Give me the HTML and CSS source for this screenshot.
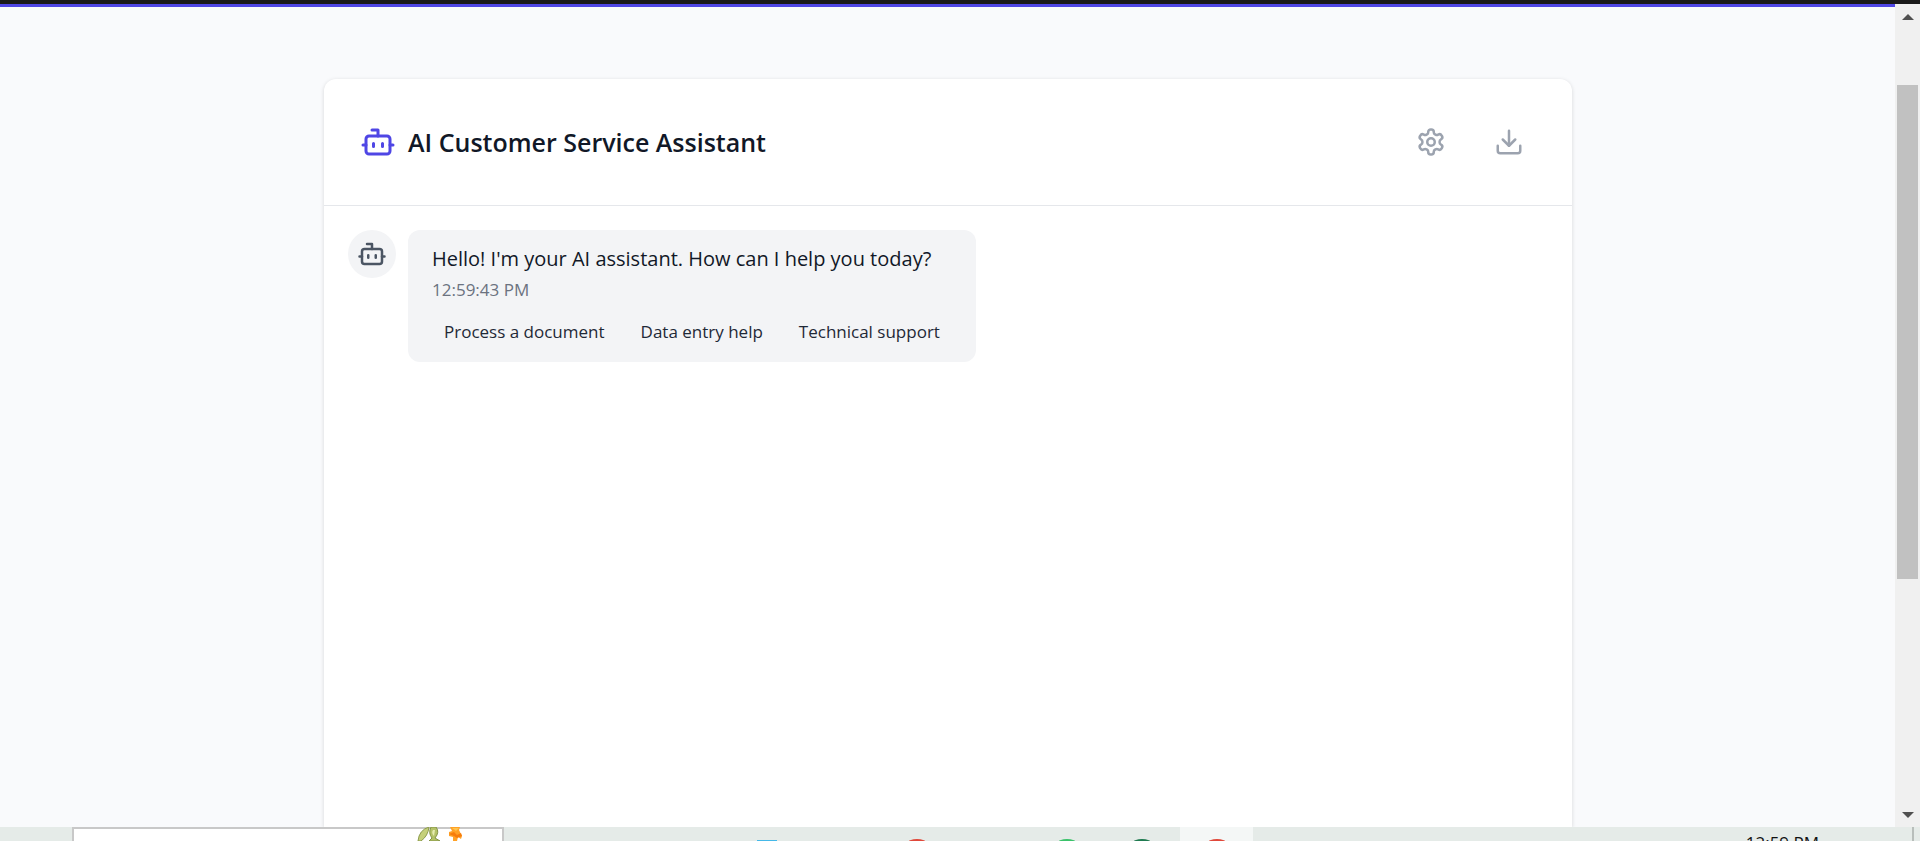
FILE: index.html
```html
<!DOCTYPE html>
<html lang="en">
<head>
<meta charset="utf-8">
<title>AI Customer Service Assistant</title>
<link rel="stylesheet" href="styles.css">
</head>
<body>
<svg class="symbols" aria-hidden="true">
  <symbol id="bot" viewBox="0 0 24 24">
    <path d="M12 8V4H8"/><rect width="16" height="12" x="4" y="8" rx="2"/><path d="M2 14h2M20 14h2M15 13v2M9 13v2"/>
  </symbol>
</svg>
<div class="window-edge"></div>
<div class="viewport">
  <div class="page">
    <main class="card">
      <header class="card-header">
        <svg class="icon icon-brand" aria-hidden="true"><use href="#bot"/></svg>
        <h1 class="title">AI Customer Service Assistant</h1>
        <div class="actions">
          <button class="icon-button" type="button" aria-label="Settings">
            <svg class="icon" viewBox="0 0 24 24" aria-hidden="true"><path d="M12.22 2h-.44a2 2 0 0 0-2 2v.18a2 2 0 0 1-1 1.73l-.43.25a2 2 0 0 1-2 0l-.15-.08a2 2 0 0 0-2.73.73l-.22.38a2 2 0 0 0 .73 2.73l.15.1a2 2 0 0 1 1 1.72v.51a2 2 0 0 1-1 1.74l-.15.09a2 2 0 0 0-.73 2.73l.22.38a2 2 0 0 0 2.73.73l.15-.08a2 2 0 0 1 2 0l.43.25a2 2 0 0 1 1 1.73V20a2 2 0 0 0 2 2h.44a2 2 0 0 0 2-2v-.18a2 2 0 0 1 1-1.73l.43-.25a2 2 0 0 1 2 0l.15.08a2 2 0 0 0 2.73-.73l.22-.39a2 2 0 0 0-.73-2.73l-.15-.08a2 2 0 0 1-1-1.74v-.5a2 2 0 0 1 1-1.74l.15-.09a2 2 0 0 0 .73-2.73l-.22-.38a2 2 0 0 0-2.73-.73l-.15.08a2 2 0 0 1-2 0l-.43-.25a2 2 0 0 1-1-1.73V4a2 2 0 0 0-2-2z"/><circle cx="12" cy="12" r="3"/></svg>
          </button>
          <button class="icon-button" type="button" aria-label="Download">
            <svg class="icon" viewBox="0 0 24 24" aria-hidden="true"><path d="M21 15v4a2 2 0 0 1-2 2H5a2 2 0 0 1-2-2v-4"/><path d="m7 10 5 5 5-5"/><path d="M12 15V3"/></svg>
          </button>
        </div>
      </header>
      <section class="messages">
        <div class="avatar"><svg class="icon" aria-hidden="true"><use href="#bot"/></svg></div>
        <article class="bubble">
          <p class="message">Hello! I'm your AI assistant. How can I help you today?</p>
          <time class="stamp">12:59:43 PM</time>
          <div class="suggestions">
            <button class="suggestion" type="button">Process a document</button>
            <button class="suggestion" type="button">Data entry help</button>
            <button class="suggestion" type="button">Technical support</button>
          </div>
        </article>
      </section>
    </main>
  </div>
  <div class="scrollbar">
    <svg class="arrow" viewBox="0 0 12 6" aria-hidden="true"><path d="M6 0l6 6H0z"/></svg>
    <div class="track"><div class="thumb"></div></div>
    <svg class="arrow" viewBox="0 0 12 6" aria-hidden="true"><path d="M0 0h12L6 6z"/></svg>
  </div>
</div>
<footer class="taskbar">
  <div class="search">
    <svg class="flowers" width="52" height="14" viewBox="0 0 52 14" aria-hidden="true">
      <path d="M3 14Q4 3 14 0Q13 9 6 14z" fill="#c5d07a" stroke="#8d9c4c"/>
      <path d="M16 0Q13 6 17 11L14 14H25L20 11Q25 5 21 0z" fill="#b4c268" stroke="#839344"/>
      <path d="M18 3Q16 6 19 9L20 3z" fill="#e6ecb0"/>
      <path d="M35 0H45L44 3L47 9L46 12L43 10L42 14H38V10L34 9V5L37 4z" fill="#ffa126"/>
      <path d="M34 7L39 5L42 8L46 6L47 9L42 11L39 9z" fill="#f77c0b"/>
      <path d="M37 1H44L41 4z" fill="#ffc44d"/>
    </svg>
  </div>
  <div class="apps">
    <button class="app app-mail" type="button" aria-label="Mail"><span class="tile"></span></button>
    <button class="app app-chrome" type="button" aria-label="Browser"><span class="disc"></span></button>
    <button class="app app-chat" type="button" aria-label="Chat"><span class="disc"></span></button>
    <button class="app app-web" type="button" aria-label="Web"><span class="disc"></span></button>
    <button class="app app-active" type="button" aria-label="Active browser"><span class="disc"></span></button>
  </div>
  <time class="clock">12:59 PM</time>
  <div class="desktop-edge"></div>
</footer>
</body>
</html>
```
FILE: styles.css
```css
* { box-sizing: border-box; }

body {
  margin: 0;
  height: 100vh;
  display: flex;
  flex-direction: column;
  overflow: hidden;
  font-family: "Open Sans", "Noto Sans", sans-serif;
  color: #111827;
  background: #f9fafb;
}

button {
  border: 0;
  padding: 0;
  background: none;
  color: inherit;
  font: inherit;
}

.symbols { display: none; }

.window-edge { flex: none; height: 4px; background: #1a1a1a; }

.viewport { flex: 1; min-height: 0; display: flex; }

.page {
  flex: 1;
  display: flex;
  padding: 72px 323px 0 324px;
  border-top: 3px solid #4f46e5;
  background: #f9fafc;
}

.card {
  flex: 1;
  border-radius: 12px 12px 0 0;
  background: #fff;
  box-shadow: 0 1px 4px rgba(0, 0, 0, 0.14);
}

.card-header {
  display: flex;
  align-items: center;
  gap: 12px;
  padding: 36px;
  border-bottom: 1px solid #e5e7eb;
}

.icon {
  display: block;
  width: 30px;
  height: 30px;
  fill: none;
  stroke: currentColor;
  stroke-width: 2;
  stroke-linecap: round;
  stroke-linejoin: round;
}

.icon-brand { width: 36px; height: 36px; color: #4f46e5; }

.title {
  flex: 1;
  margin: 0;
  font-size: 25px;
  line-height: 36px;
  font-weight: 600;
}

.actions { display: flex; gap: 24px; color: #9ca3af; }
.icon-button { padding: 12px; }

.messages { display: flex; align-items: flex-start; gap: 12px; padding: 24px; }

.avatar {
  padding: 9px;
  border-radius: 50%;
  background: #f3f4f6;
  color: #4b5563;
}

.bubble {
  padding: 12px 24px;
  border-radius: 12px;
  background: #f3f4f6;
}

.message { margin: 0 0 3px; font-size: 20px; line-height: 33px; }
.stamp { display: block; font-size: 17px; line-height: 24px; color: #6b7280; }
.suggestions { display: flex; gap: 12px; margin-top: 12px; }
.suggestion { padding: 0 12px; font-size: 17px; line-height: 36px; color: #1f2937; }

.scrollbar {
  width: 25px;
  display: flex;
  flex-direction: column;
  align-items: center;
  padding: 10px 2px 9px;
  background: #f0f0f0;
}

.arrow { width: 12px; height: 6px; fill: #505050; }
.track { flex: 1; width: 100%; padding: 65px 0 0; }
.thumb { height: 68%; background: #c1c1c1; }

.taskbar {
  flex: none;
  display: flex;
  height: 14px;
  overflow: hidden;
  background: #e5ebe8;
}

.search {
  width: 432px;
  height: 48px;
  margin-left: 72px;
  border: 2px solid #c8c8c8;
  background: #fff;
}

.flowers { display: block; margin: -2px 0 0 341px; }

.apps {
  display: grid;
  grid-template-columns: repeat(7, 73px);
  column-gap: 2px;
  height: 60px;
  margin-left: 226px;
}

.app { display: flex; justify-content: center; align-items: flex-start; padding-top: 12px; }
.app-chrome { grid-column: 3; }
.app-chat { grid-column: 5; }
.app-web { grid-column: 6; }
.app-active { grid-column: 7; background: #f4f7f6; }
.disc { width: 36px; height: 36px; border-radius: 50%; background: #e0483a; }
.app-chat .disc { background: #3ac26a; }
.app-web .disc { background: #1f7a50; }
.tile { width: 20px; height: 30px; margin-top: 1px; background: #45b8e8; }

.clock {
  margin: 4px 93px 0 auto;
  font-size: 17px;
  line-height: 24px;
  white-space: nowrap;
  color: #111;
}

.desktop-edge { width: 2px; margin-right: 6px; background: #b8bebb; }
```
